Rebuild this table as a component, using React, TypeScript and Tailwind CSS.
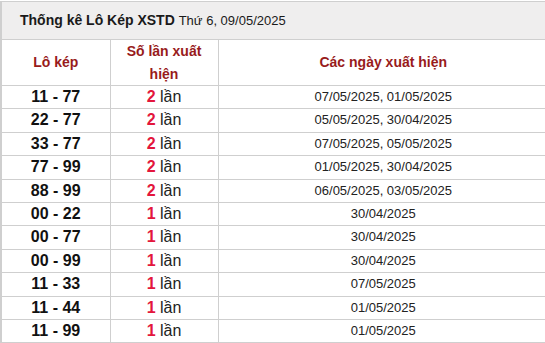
const rows: [string, number, string][] = [
  ['11 - 77', 2, '07/05/2025, 01/05/2025'],
  ['22 - 77', 2, '05/05/2025, 30/04/2025'],
  ['33 - 77', 2, '07/05/2025, 05/05/2025'],
  ['77 - 99', 2, '01/05/2025, 30/04/2025'],
  ['88 - 99', 2, '06/05/2025, 03/05/2025'],
  ['00 - 22', 1, '30/04/2025'],
  ['00 - 77', 1, '30/04/2025'],
  ['00 - 99', 1, '30/04/2025'],
  ['11 - 33', 1, '07/05/2025'],
  ['11 - 44', 1, '01/05/2025'],
  ['11 - 99', 1, '01/05/2025'],
];

export default function App() {
  return (
    <div className="h-[343px] w-[545px] overflow-hidden bg-white pt-px font-['Liberation_Sans',Arial,sans-serif]">
      <table className="w-[548px] table-fixed border-collapse border-l-2 border-[#cfcfcf]">
        <colgroup>
          <col className="w-[109px]" />
          <col className="w-[108px]" />
          <col />
        </colgroup>
        <thead>
          <tr className="h-[38px] border-y border-[#cfcfcf] bg-[#efeeee]">
            <th colSpan={3} className="pl-[18px] text-left text-[14px] font-bold text-[#1a1a1a]">
              Thống kê Lô Kép XSTD <span className="text-[13px] font-normal">Thứ 6, 09/05/2025</span>
            </th>
          </tr>
          <tr className="border-b border-[#cfcfcf] text-[14px] font-bold leading-[22.5px] text-[#981b1b]">
            <th className="border-r border-[#cfcfcf] px-2">Lô kép</th>
            <th className="border-r border-[#cfcfcf] px-3">Số lần xuất hiện</th>
            <th className="px-2">Các ngày xuất hiện</th>
          </tr>
        </thead>
        <tbody>
          {rows.map(([pair, n, dates]) => (
            <tr key={pair} className="border-b border-[#cfcfcf] leading-[22.4px]">
              <td className="border-r border-[#cfcfcf] text-center text-[16px] font-bold text-[#111]">{pair}</td>
              <td className="border-r border-[#cfcfcf] text-center text-[16px] text-[#222]">
                <span className="font-bold text-[#e3163c]">{n}</span> lần
              </td>
              <td className="text-center text-[13px] text-[#222]">{dates}</td>
            </tr>
          ))}
        </tbody>
      </table>
    </div>
  );
}
